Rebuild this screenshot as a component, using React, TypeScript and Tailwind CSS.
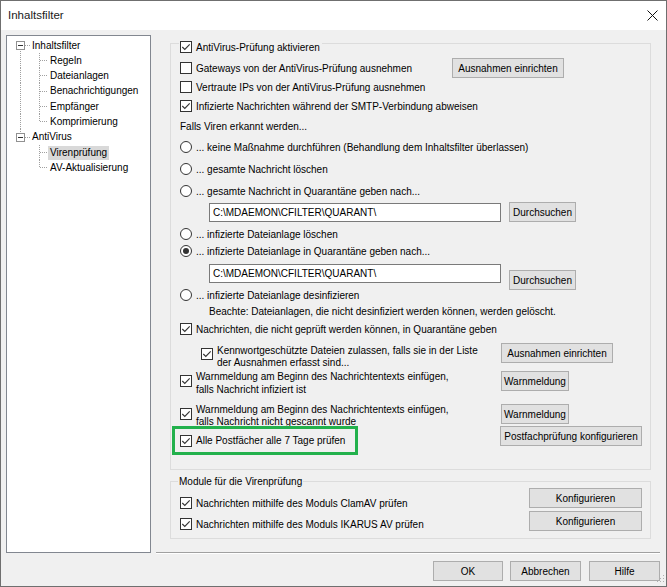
import React from "react";

function Check({ checked = true }: { checked?: boolean }) {
  return (
    <span className="inline-flex w-[12px] h-[12px] shrink-0 border border-[#333333] bg-white items-center justify-center">
      {checked && (
        <svg width="10" height="10" viewBox="0 0 10 10">
          <path d="M1.3 5 L3.8 7.5 L8.7 2.3" fill="none" stroke="#333333" strokeWidth="1.1" />
        </svg>
      )}
    </span>
  );
}

function Radio({ checked = false }: { checked?: boolean }) {
  return (
    <svg width="12" height="12" viewBox="0 0 12 12" className="shrink-0">
      <circle cx="6" cy="6" r="5.5" fill="white" stroke="#333333" strokeWidth="1" />
      {checked && <circle cx="6" cy="6" r="3" fill="#333333" />}
    </svg>
  );
}

function Btn({ children, className = "" }: { children: React.ReactNode; className?: string }) {
  return (
    <div
      className={`h-[20px] border border-[#adadad] bg-[#e1e1e1] flex items-center justify-center shrink-0 whitespace-nowrap ${className}`}
    >
      {children}
    </div>
  );
}

function CRow({ label, className = "" }: { label: string; className?: string }) {
  return (
    <div className={`flex items-center h-[16px] gap-[4px] whitespace-nowrap ${className}`}>
      <Check />
      <span>{label}</span>
    </div>
  );
}

function RRow({ label, checked = false, className = "" }: { label: string; checked?: boolean; className?: string }) {
  return (
    <div className={`flex items-center h-[16px] gap-[4px] whitespace-nowrap ${className}`}>
      <Radio checked={checked} />
      <span>{label}</span>
    </div>
  );
}

type TNode = {
  label: string;
  root: boolean;
  h: number;
  lineDown?: boolean;
  lineUp?: boolean;
  rootLine?: boolean;
  last?: boolean;
  selected?: boolean;
};

const nodes: TNode[] = [
  { label: "Inhaltsfilter", root: true, h: 15, lineDown: true },
  { label: "Regeln", root: false, h: 15, rootLine: true },
  { label: "Dateianlagen", root: false, h: 15, rootLine: true },
  { label: "Benachrichtigungen", root: false, h: 16, rootLine: true },
  { label: "Empfänger", root: false, h: 15, rootLine: true },
  { label: "Komprimierung", root: false, h: 15, rootLine: true, last: true },
  { label: "AntiVirus", root: true, h: 16, lineUp: true },
  { label: "Virenprüfung", root: false, h: 15, selected: true },
  { label: "AV-Aktualisierung", root: false, h: 15, last: true },
];

function TreeRow({ n }: { n: TNode }) {
  const c = Math.floor(n.h / 2) + 0.5;
  const w = n.root ? 23 : 41;
  const dot = { stroke: "#a0a0a0", strokeWidth: 1, strokeDasharray: "1 1", shapeRendering: "crispEdges" as const };
  return (
    <div className="flex items-center" style={{ height: n.h }}>
      <svg width={w} height={n.h} className="shrink-0">
        {n.root ? (
          <>
            {n.lineUp && <line x1="13.5" y1="0" x2="13.5" y2={c - 4} {...dot} />}
            {n.lineDown && <line x1="13.5" y1={c + 5} x2="13.5" y2={n.h} {...dot} />}
            <rect x="9.5" y={c - 4} width="8" height="8" fill="white" stroke="#919191" shapeRendering="crispEdges" />
            <line x1="11" y1={c} x2="16" y2={c} stroke="#333" shapeRendering="crispEdges" />
            <line x1="18" y1={c} x2="23" y2={c} {...dot} />
          </>
        ) : (
          <>
            {n.rootLine && <line x1="13.5" y1="0" x2="13.5" y2={n.h} {...dot} />}
            <line x1="32.5" y1="0" x2="32.5" y2={n.last ? c : n.h} {...dot} />
            <line x1="33" y1={c} x2="41" y2={c} {...dot} />
          </>
        )}
      </svg>
      <span
        className={`px-[2px] h-[14px] leading-[14px] whitespace-nowrap ${n.selected ? "bg-[#d9d9d9]" : ""}`}
      >
        {n.label}
      </span>
    </div>
  );
}

export default function App() {
  return (
    <div className="relative w-[667px] h-[587px] border border-[#6f6f6f] bg-[#f0f0f0] flex flex-col font-['Liberation_Sans',Arial,sans-serif] text-[10px] text-black">
      {/* Title bar */}
      <div className="h-[29px] bg-white flex items-center justify-between pl-[7px] pr-[8px] shrink-0">
        <span className="text-[11.5px] text-[#1a1a1a]">Inhaltsfilter</span>
        <svg width="11" height="11" viewBox="0 0 11 11">
          <path d="M0.5 0.5 L10.5 10.5 M10.5 0.5 L0.5 10.5" stroke="#111" strokeWidth="1" />
        </svg>
      </div>

      <div className="flex shrink-0">
        {/* Tree */}
        <div className="ml-[5px] mt-[5px] w-[145px] h-[518px] border border-[#828790] bg-white pt-[2px] shrink-0">
          {nodes.map((n) => (
            <TreeRow key={n.label} n={n} />
          ))}
        </div>

        {/* Right column */}
        <div className="flex-1 pl-[5px] pr-[6px] flex flex-col">
          {/* Group 1 */}
          <div className="relative ml-[14px] mt-[13px] w-[481px] h-[427px] border border-[#dcdcdc] pl-[9px] flex flex-col">
            <div className="absolute left-[8px] top-[-3px] flex items-center gap-[4px] bg-[#f0f0f0] pl-[1px] pr-[2px] h-[12px] whitespace-nowrap">
              <Check />
              <span>AntiVirus-Prüfung aktivieren</span>
            </div>

            <div className="flex items-center h-[20px] mt-[14px]">
              <div className="w-[272px] flex items-center gap-[4px] whitespace-nowrap">
                <Check checked={false} />
                <span>Gateways von der AntiVirus-Prüfung ausnehmen</span>
              </div>
              <Btn className="w-[112px]">Ausnahmen einrichten</Btn>
            </div>
            <div className="flex items-center h-[16px] gap-[4px] mt-[1px] whitespace-nowrap">
              <Check checked={false} />
              <span>Vertraute IPs von der AntiVirus-Prüfung ausnehmen</span>
            </div>
            <CRow className="mt-[3px]" label="Infizierte Nachrichten während der SMTP-Verbindung abweisen" />
            <div className="h-[16px] mt-[4px] flex items-center">Falls Viren erkannt werden...</div>
            <RRow className="mt-[5px]" label="... keine Maßnahme durchführen (Behandlung dem Inhaltsfilter überlassen)" />
            <RRow className="mt-[6px]" label="... gesamte Nachricht löschen" />
            <RRow className="mt-[6px]" label="... gesamte Nachricht in Quarantäne geben nach..." />
            <div className="flex items-start h-[20px] mt-[3px]">
              <div className="ml-[29px] mt-[1px] w-[292px] h-[19px] border border-[#7a7a7a] bg-white flex items-center pl-[3px]">
                C:\MDAEMON\CFILTER\QUARANT\
              </div>
              <Btn className="ml-[8px] w-[67px]">Durchsuchen</Btn>
            </div>
            <RRow className="mt-[4px]" label="... infizierte Dateianlage löschen" />
            <RRow className="mt-[1px]" checked label="... infizierte Dateianlage in Quarantäne geben nach..." />
            <div className="flex items-start h-[19px] mt-[5px]">
              <div className="ml-[29px] w-[292px] h-[19px] border border-[#7a7a7a] bg-white flex items-center pl-[3px]">
                C:\MDAEMON\CFILTER\QUARANT\
              </div>
              <Btn className="ml-[8px] mt-[6px] w-[67px]">Durchsuchen</Btn>
            </div>
            <RRow className="mt-[4px]" label="... infizierte Dateianlage desinfizieren" />
            <div className="h-[16px] ml-[29px] flex items-center whitespace-nowrap">
              Beachte: Dateianlagen, die nicht desinfiziert werden können, werden gelöscht.
            </div>
            <CRow className="mt-[2px]" label="Nachrichten, die nicht geprüft werden können, in Quarantäne geben" />

            <div className="flex items-start h-[26px] mt-[6px]">
              <div className="ml-[21px] w-[300px] flex items-start">
                <div className="mt-[5px]">
                  <Check />
                </div>
                <div className="ml-[4px] mt-[2px] leading-[12px] whitespace-nowrap">
                  Kennwortgeschützte Dateien zulassen, falls sie in der Liste
                  <br />
                  der Ausnahmen erfasst sind...
                </div>
              </div>
              <Btn className="w-[112px]">Ausnahmen einrichten</Btn>
            </div>

            <div className="flex items-start h-[24px] mt-[2px]">
              <div className="w-[321px] flex items-start">
                <div className="mt-[4px]">
                  <Check />
                </div>
                <div className="ml-[4px] leading-[12.5px] whitespace-nowrap">
                  Warnmeldung am Beginn des Nachrichtentexts einfügen,
                  <br />
                  falls Nachricht infiziert ist
                </div>
              </div>
              <Btn className="w-[68px]">Warnmeldung</Btn>
            </div>

            <div className="flex items-start h-[22px] mt-[9px]">
              <div className="w-[321px] flex items-start">
                <div className="mt-[4px]">
                  <Check />
                </div>
                <div className="ml-[4px] leading-[12px] whitespace-nowrap">
                  Warnmeldung am Beginn des Nachrichtentexts einfügen,
                  <br />
                  falls Nachricht nicht gescannt wurde
                </div>
              </div>
              <Btn className="w-[68px]">Warnmeldung</Btn>
            </div>

            <div className="flex items-start h-[29px]">
              <div className="relative -ml-[8px] w-[186px] h-[29px] border-[3px] border-[#22b14c] flex items-center pl-[5px] gap-[4px] whitespace-nowrap">
                <Check />
                <span>Alle Postfächer alle 7 Tage prüfen</span>
              </div>
              <Btn className="ml-[142px] w-[142px]">Postfachprüfung konfigurieren</Btn>
            </div>
          </div>

          {/* Group 2 */}
          <div className="relative ml-[14px] mt-[11px] w-[481px] h-[58px] border border-[#dcdcdc] pl-[9px] flex">
            <div className="absolute left-[7px] top-[-7px] bg-[#f0f0f0] px-[1px] h-[12px] flex items-center whitespace-nowrap">
              Module für die Virenprüfung
            </div>
            <div className="w-[349px] flex flex-col">
              <CRow className="mt-[13px]" label="Nachrichten mithilfe des Moduls ClamAV prüfen" />
              <CRow className="mt-[5px]" label="Nachrichten mithilfe des Moduls IKARUS AV prüfen" />
            </div>
            <div className="flex flex-col">
              <Btn className="mt-[6px] w-[113px]">Konfigurieren</Btn>
              <Btn className="mt-[3px] w-[113px]">Konfigurieren</Btn>
            </div>
          </div>

          {/* Separator */}
          <div className="mt-[13px] h-[2px] border-t border-[#a0a0a0] border-b border-b-white" />
        </div>
      </div>

      {/* Bottom buttons */}
      <div className="flex justify-end pr-[6px] mt-[7px]">
        <Btn className="w-[70px] border-[#0078d7]">OK</Btn>
        <Btn className="ml-[7px] w-[71px]">Abbrechen</Btn>
        <Btn className="ml-[8px] w-[71px]">Hilfe</Btn>
      </div>

      {/* Size grip */}
      <svg width="10" height="10" viewBox="0 0 10 10" className="absolute right-[1px] bottom-[1px]">
        <rect x="8" y="0" width="1" height="1" fill="#b0b0b0" />
        <rect x="5" y="3" width="1" height="1" fill="#b0b0b0" />
        <rect x="8" y="3" width="1" height="1" fill="#b0b0b0" />
        <rect x="2" y="6" width="1" height="1" fill="#b0b0b0" />
        <rect x="5" y="6" width="1" height="1" fill="#b0b0b0" />
        <rect x="8" y="6" width="1" height="1" fill="#b0b0b0" />
      </svg>
    </div>
  );
}
